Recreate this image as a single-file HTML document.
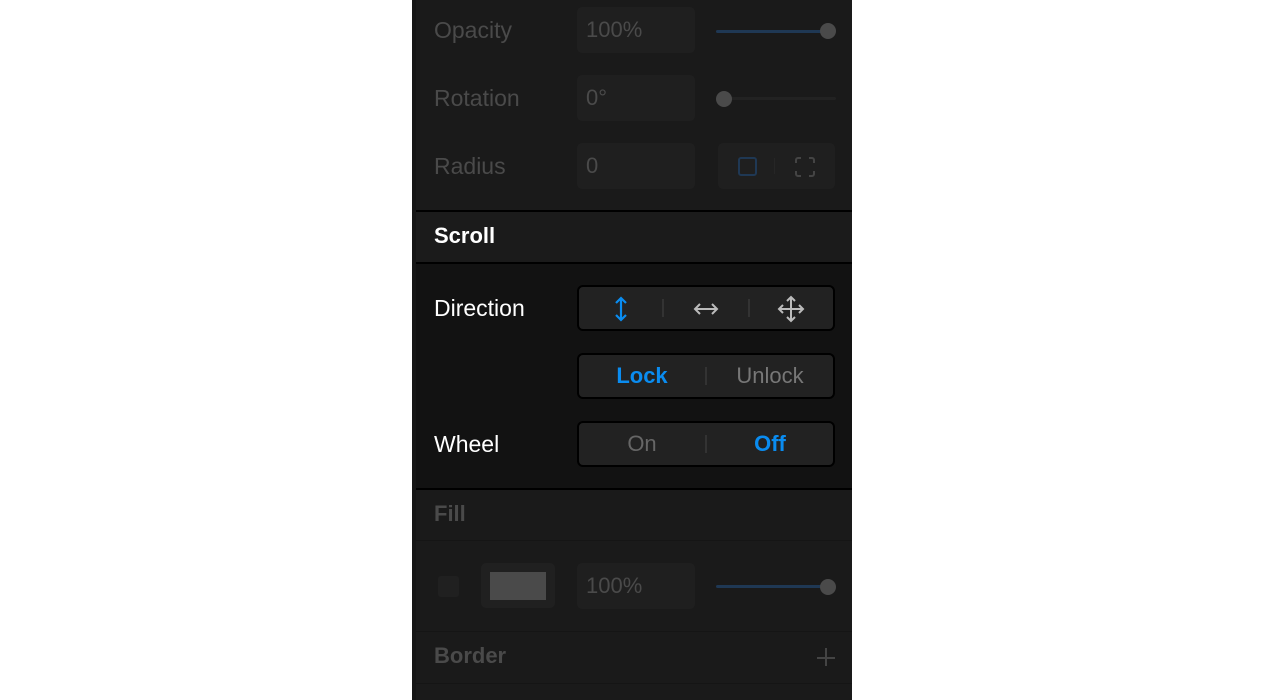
<!DOCTYPE html>
<html><head><meta charset="utf-8"><style>
*{margin:0;padding:0;box-sizing:border-box}
body{width:1266px;height:700px;background:#fff;position:relative;overflow:hidden;font-family:"Liberation Sans",sans-serif;font-size:22px}
.p{position:absolute;left:412px;top:0;width:440px;height:700px;background:#1a1a1a}
.a{position:absolute}
.lbl{position:absolute;left:22px;color:#4a4a4a;line-height:24px;font-size:23px}
.inp{position:absolute;left:165px;width:118px;height:46px;background:#1f1f1f;border-radius:5px;color:#4a4a4a;padding-left:9px;line-height:46px}
.seg{position:absolute;left:165px;width:258px;height:46px;background:#222;border:2px solid #000;border-radius:6px;display:flex;align-items:center}
.seg>div{flex:1;text-align:center;line-height:42px}
.sep{flex:0 0 2px!important;height:18px;background:#333}
</style></head><body>
<div class="p">
 <div class="a" style="left:0;top:0;width:4px;height:700px;background:#161616"></div>
 <div class="lbl" style="top:18px">Opacity</div>
 <div class="inp" style="top:7px">100%</div>
 <div class="a" style="left:304px;top:30px;width:112px;height:3px;background:#1f3854;border-radius:2px"></div>
 <div class="a" style="left:408px;top:23px;width:16px;height:16px;background:#4a4a4a;border-radius:50%"></div>
 <div class="lbl" style="top:86px">Rotation</div>
 <div class="inp" style="top:75px">0°</div>
 <div class="a" style="left:304px;top:97px;width:120px;height:3px;background:#222;border-radius:2px"></div>
 <div class="a" style="left:304px;top:91px;width:16px;height:16px;background:#4a4a4a;border-radius:50%"></div>
 <div class="lbl" style="top:154px">Radius</div>
 <div class="inp" style="top:143px">0</div>
 <div class="a" style="left:306px;top:143px;width:117px;height:46px;background:#1f1f1f;border-radius:5px"></div>
 <div class="a" style="left:326px;top:157px;width:19px;height:19px;border:2px solid #1f3854;border-radius:3px"></div>
 <div class="a" style="left:362px;top:158px;width:1px;height:16px;background:#262626"></div>
 <svg class="a" style="left:382px;top:156px" width="22" height="22" viewBox="0 0 22 22" fill="none" stroke="#444" stroke-width="2"><path d="M2 7V4a2 2 0 0 1 2-2h3M15 2h3a2 2 0 0 1 2 2v3M20 15v3a2 2 0 0 1-2 2h-3M7 20H4a2 2 0 0 1-2-2v-3"/></svg>

 <div class="a" style="left:4px;top:210px;width:436px;height:54px;background:#1b1b1b;border-top:2px solid #000;border-bottom:2px solid #000"></div>
 <div class="a" style="left:22px;top:224px;color:#fff;font-weight:bold;line-height:24px">Scroll</div>
 <div class="a" style="left:4px;top:264px;width:436px;height:226px;background:#121212;border-bottom:2px solid #000"></div>
 <div class="a" style="left:22px;top:296px;color:#fff;line-height:24px;font-size:23px">Direction</div>
 <div class="seg" style="top:285px">
  <div><svg width="14" height="26" viewBox="0 0 14 26" fill="none" stroke="#0a8cf0" stroke-width="2.2" style="vertical-align:middle"><path d="M7 2v22M2 7l5-5 5 5M2 19l5 5 5-5"/></svg></div>
  <div class="sep"></div>
  <div><svg width="26" height="14" viewBox="0 0 26 14" fill="none" stroke="#bbb" stroke-width="2" style="vertical-align:middle"><path d="M2 7h22M7 2L2 7l5 5M19 2l5 5-5 5"/></svg></div>
  <div class="sep"></div>
  <div><svg width="28" height="28" viewBox="0 0 28 28" fill="none" stroke="#bbb" stroke-width="2" style="vertical-align:middle"><path d="M14 2v24M2 14h24M10 6l4-4 4 4M10 22l4 4 4-4M6 10l-4 4 4 4M22 10l4 4-4 4"/></svg></div>
 </div>
 <div class="seg" style="top:353px"><div style="color:#0a8cf0;font-weight:bold">Lock</div><div class="sep"></div><div style="color:#777">Unlock</div></div>
 <div class="a" style="left:22px;top:432px;color:#fff;line-height:24px;font-size:23px">Wheel</div>
 <div class="seg" style="top:421px"><div style="color:#666">On</div><div class="sep"></div><div style="color:#0a8cf0;font-weight:bold">Off</div></div>

 <div class="a" style="left:22px;top:502px;color:#4a4a4a;font-weight:bold;line-height:24px">Fill</div>
 <div class="a" style="left:4px;top:540px;width:436px;height:1px;background:#151515"></div>
 <div class="a" style="left:26px;top:576px;width:21px;height:21px;background:#202020;border-radius:3px"></div>
 <div class="a" style="left:69px;top:563px;width:74px;height:45px;background:#202020;border-radius:5px"></div>
 <div class="a" style="left:78px;top:572px;width:56px;height:28px;background:#4a4a4a"></div>
 <div class="inp" style="top:563px">100%</div>
 <div class="a" style="left:304px;top:585px;width:112px;height:3px;background:#1f3854;border-radius:2px"></div>
 <div class="a" style="left:408px;top:579px;width:16px;height:16px;background:#4a4a4a;border-radius:50%"></div>
 <div class="a" style="left:4px;top:631px;width:436px;height:1px;background:#151515"></div>
 <div class="a" style="left:22px;top:644px;color:#4a4a4a;font-weight:bold;line-height:24px">Border</div>
 <div class="a" style="left:405px;top:657px;width:18px;height:2px;background:#444"></div>
 <div class="a" style="left:413px;top:648px;width:2px;height:18px;background:#444"></div>
 <div class="a" style="left:4px;top:683px;width:436px;height:1px;background:#151515"></div>
</div>
</body></html>
